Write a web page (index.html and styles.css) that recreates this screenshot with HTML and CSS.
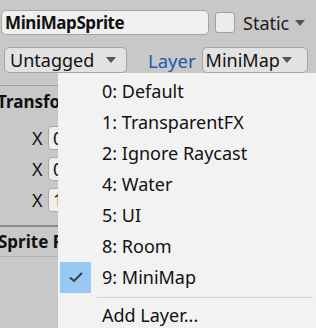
FILE: index.html
```html
<!DOCTYPE html>
<html>
<head>
<meta charset="utf-8">
<link rel="stylesheet" href="styles.css">
</head>
<body>
<div class="inspector">
  <div class="row row-name">
    <div class="name-field">MiniMapSprite</div>
    <div class="checkbox"></div>
    <div class="static">Static<span class="tri"></span></div>
  </div>
  <div class="row row-tag">
    <div class="dropdown tag-dd">Untagged<span class="tri"></span></div>
    <div class="layer-label">Layer</div>
    <div class="dropdown layer-dd">MiniMap<span class="tri"></span></div>
  </div>
  <div class="sep sep-light"></div>
  <div class="comp-header">Transform</div>
  <div class="vec-rows">
    <div class="vec-row"><span class="axis">X</span><div class="num-field">0</div></div>
    <div class="vec-row"><span class="axis">X</span><div class="num-field">0</div></div>
    <div class="vec-row"><span class="axis">X</span><div class="num-field">1</div></div>
  </div>
  <div class="sep sep-dark"></div>
  <div class="comp-header comp-header2">Sprite Renderer</div>
  <div class="sep sep-light"></div>
</div>

<div class="menu">
  <div class="item"><span class="mark"></span><span class="label">0: Default</span></div>
  <div class="item"><span class="mark"></span><span class="label">1: TransparentFX</span></div>
  <div class="item"><span class="mark"></span><span class="label">2: Ignore Raycast</span></div>
  <div class="item"><span class="mark"></span><span class="label">4: Water</span></div>
  <div class="item"><span class="mark"></span><span class="label">5: UI</span></div>
  <div class="item"><span class="mark"></span><span class="label">8: Room</span></div>
  <div class="item checked"><span class="mark"><svg width="16" height="12" viewBox="0 0 16 12"><path d="M2 6.5 L6 10 L14 2" fill="none" stroke="#3c3c3c" stroke-width="2"/></svg></span><span class="label">9: MiniMap</span></div>
  <div class="menu-sep"></div>
  <div class="item"><span class="mark"></span><span class="label">Add Layer...</span></div>
</div>
</body>
</html>
```

FILE: styles.css
```css
html, body {
  margin: 0;
  padding: 0;
}
body {
  width: 316px;
  height: 328px;
  overflow: hidden;
  background: #c8c8c8;
  font-family: "Noto Sans", "Open Sans", sans-serif;
  color: #111;
  position: relative;
}
.inspector {
  display: flex;
  flex-direction: column;
}
.row {
  display: flex;
  align-items: center;
}
.row-name {
  padding-top: 10px;
  height: 25px;
}
.name-field {
  margin-left: 1px;
  width: 203px;
  height: 23px;
  border: 1px solid #a6a6a6;
  border-radius: 5px;
  background: #f0f0f0;
  font-weight: bold;
  font-size: 17px;
  letter-spacing: -0.4px;
  line-height: 23px;
  padding-left: 3px;
  box-sizing: content-box;
}
.checkbox {
  margin-left: 6px;
  width: 18px;
  height: 19px;
  border: 1px solid #a0a0a0;
  border-radius: 3px;
  background: #ececec;
}
.static {
  margin-left: 8px;
  font-size: 18px;
  display: flex;
  align-items: center;
  color: #1a1a1a;
}
.tri {
  display: inline-block;
  width: 0;
  height: 0;
  border-left: 5px solid transparent;
  border-right: 5px solid transparent;
  border-top: 6px solid #555;
  margin-left: 6px;
}
.row-tag {
  margin-top: 12px;
  height: 26px;
}
.dropdown {
  height: 24px;
  border: 1px solid #a4a4a4;
  border-radius: 5px;
  background: #e2e2e2;
  font-size: 18px;
  line-height: 24px;
  display: flex;
  align-items: center;
  box-sizing: content-box;
}
.tag-dd {
  margin-left: 4px;
  width: 116px;
  padding-left: 5px;
}
.tag-dd .tri {
  margin-left: 12px;
}
.layer-label {
  margin-left: 21px;
  font-size: 18.5px;
  color: #1e5aa8;
}
.layer-dd {
  margin-left: 6px;
  width: 101px;
  padding-left: 3px;
}
.layer-dd .tri {
  margin-left: 2px;
}
.sep {
  height: 1px;
  background: #9e9e9e;
}
.sep-light {
  margin-top: 12px;
}
.comp-header {
  height: 31px;
  font-weight: bold;
  font-size: 17px;
  line-height: 31px;
  margin-left: -3px;
  white-space: nowrap;
}
.vec-rows {
  display: flex;
  flex-direction: column;
  gap: 7px;
  padding-top: 9px;
  padding-bottom: 13px;
}
.vec-row {
  display: flex;
  align-items: center;
  height: 24px;
}
.axis {
  margin-left: 32px;
  width: 16px;
  font-size: 18px;
}
.num-field {
  width: 30px;
  height: 22px;
  border: 1px solid #a8a8a8;
  border-radius: 4px;
  background: #efefef;
  font-size: 18px;
  line-height: 22px;
  padding-left: 4px;
}
.sep-dark {
  height: 2px;
  background: #8a8a8a;
}
.comp-header2 {
  height: 29px;
  line-height: 29px;
  margin-left: -2px;
}
.comp-header2 + .sep-light {
  margin-top: 0;
  background: #b2b2b2;
}

.menu {
  position: absolute;
  left: 58px;
  top: 73px;
  right: 0;
  bottom: 0;
  background: #f2f2f2;
  padding-top: 2.5px;
  box-sizing: border-box;
}
.item {
  height: 31px;
  display: flex;
  align-items: center;
  font-size: 18px;
  color: #111;
  white-space: nowrap;
}
.mark {
  width: 31px;
  height: 31px;
  margin-left: 2px;
  margin-right: 11px;
  display: flex;
  align-items: center;
  justify-content: center;
  flex: none;
}
.checked .mark {
  background: #98c9f4;
}
.menu-sep {
  height: 1px;
  background: #d2d2d2;
  margin: 4px 3px 2px 39px;
}
```
